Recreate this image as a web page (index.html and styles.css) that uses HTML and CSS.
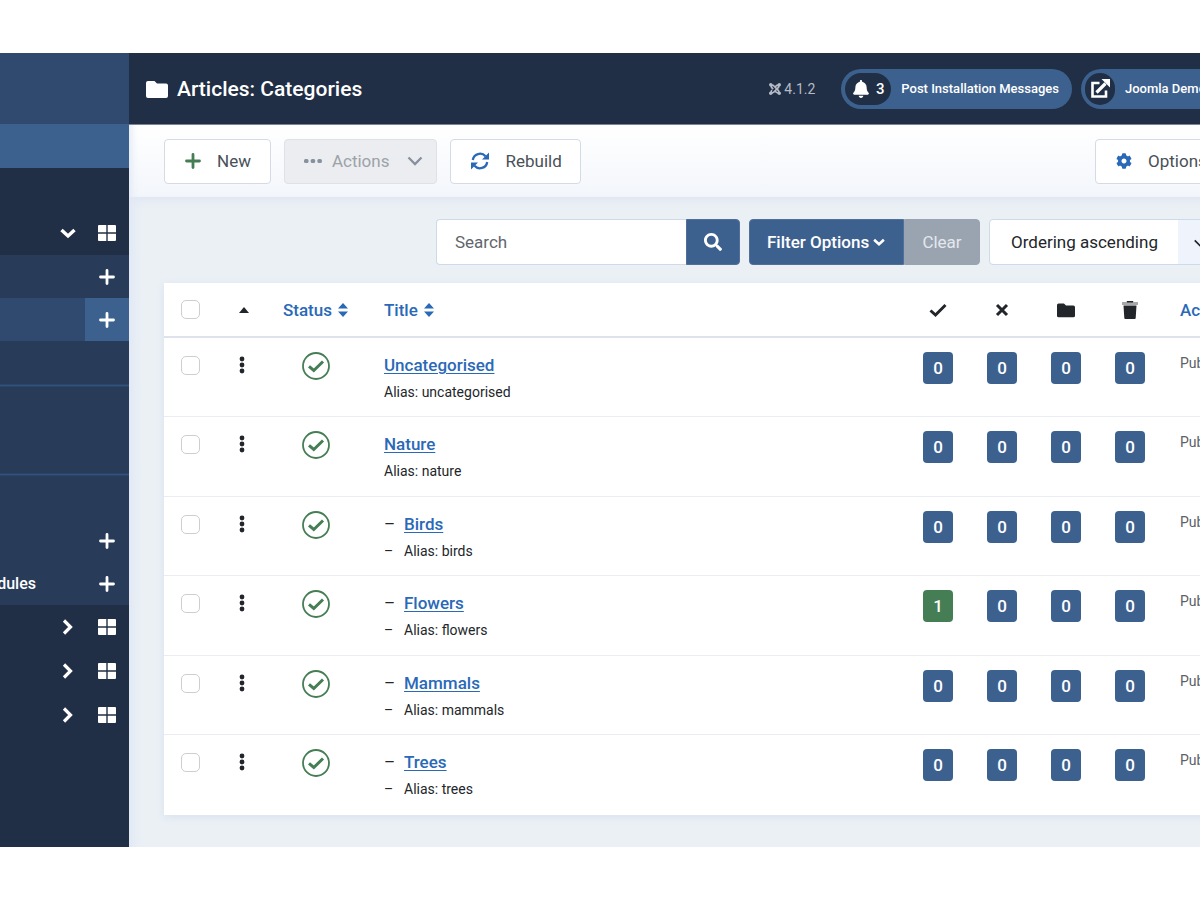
FILE: index.html
```
<!DOCTYPE html>
<html lang="en">
<head>
  <meta charset="UTF-8">
  <title>Articles: Categories</title>
  <link rel="stylesheet" href="styles.css">
</head>
<body>

  <!-- Icon set -->
  <svg class="icon-set" aria-hidden="true">
    <symbol id="folder" viewBox="0 0 22 18"><path d="M2 1h6.500l2.500 2.500h9a2 2 0 0 1 2 2V16a2 2 0 0 1-2 2H2a2 2 0 0 1-2-2V3a2 2 0 0 1 2-2z"/></symbol>
    <symbol id="plus" viewBox="0 0 16 16"><path d="M8 1.500v13M1.500 8h13" fill="none" stroke="currentColor" stroke-width="2.800" stroke-linecap="round"/></symbol>
    <symbol id="grid" viewBox="0 0 18 16"><path d="M1 0h7.300v7.300H0V1a1 1 0 0 1 1-1zM9.700 0H17a1 1 0 0 1 1 1v6.300H9.700zM0 8.700h8.300V16H1a1 1 0 0 1-1-1zM9.700 8.700H18V15a1 1 0 0 1-1 1H9.700z"/></symbol>
    <symbol id="down" viewBox="0 0 16 16"><path d="M1.500 5l6.500 6 6.500-6" fill="none" stroke="currentColor" stroke-width="3.400"/></symbol>
    <symbol id="right" viewBox="0 0 16 16"><path d="M4 1.500L10.500 8 4 14.500" fill="none" stroke="currentColor" stroke-width="3.200"/></symbol>
    <symbol id="thin-down" viewBox="0 0 16 16"><path d="M1.500 4.500L8 11l6.500-6.500" fill="none" stroke="currentColor" stroke-width="2.300"/></symbol>
    <symbol id="dots" viewBox="0 0 18 6"><rect x="0" y="1" width="4.500" height="4" rx="1.500"/><rect x="6.700" y="1" width="4.500" height="4" rx="1.500"/><rect x="13.400" y="1" width="4.500" height="4" rx="1.500"/></symbol>
    <symbol id="handle" viewBox="0 0 6 18"><circle cx="3" cy="3" r="2.400"/><circle cx="3" cy="9" r="2.400"/><circle cx="3" cy="15" r="2.400"/></symbol>
    <symbol id="refresh" viewBox="0 0 18 18"><path d="M1.800 8A7.300 7.300 0 0 1 14.500 4.200M16.200 10A7.300 7.300 0 0 1 3.500 13.800" fill="none" stroke="currentColor" stroke-width="2.300"/><path d="M18 .5V7.500h-7zM0 17.500v-7h7z"/></symbol>
    <symbol id="cog" viewBox="0 0 512 512"><path d="M487.400 315.700l-42.600-24.600c4.300-23.200 4.300-47 0-70.200l42.600-24.600c4.900-2.800 7.100-8.600 5.500-14-11.100-35.600-30-67.800-54.700-94.600-3.800-4.100-10-5.100-14.800-2.300L380.800 110c-17.900-15.400-38.500-27.300-60.800-35.100V25.800c0-5.600-3.900-10.500-9.400-11.700-36.700-8.200-74.300-7.800-109.200 0-5.500 1.200-9.400 6.100-9.400 11.700V75c-22.200 7.900-42.800 19.800-60.800 35.100L88.700 85.500c-4.900-2.800-11-1.900-14.800 2.300-24.700 26.700-43.600 58.900-54.700 94.600-1.700 5.400.6 11.200 5.500 14L67.300 221c-4.300 23.200-4.300 47 0 70.200l-42.600 24.600c-4.900 2.800-7.100 8.600-5.500 14 11.100 35.600 30 67.800 54.700 94.600 3.800 4.100 10 5.100 14.800 2.300l42.600-24.600c17.900 15.400 38.500 27.300 60.800 35.100v49.200c0 5.600 3.900 10.500 9.400 11.700 36.700 8.200 74.300 7.800 109.200 0 5.500-1.200 9.400-6.100 9.400-11.700v-49.200c22.200-7.900 42.800-19.800 60.800-35.100l42.600 24.600c4.900 2.800 11 1.900 14.800-2.300 24.700-26.700 43.600-58.900 54.700-94.600 1.500-5.500-.7-11.300-5.600-14.100zM256 336c-44.100 0-80-35.900-80-80s35.900-80 80-80 80 35.900 80 80-35.900 80-80 80z"/></symbol>
    <symbol id="bell" viewBox="0 0 448 512"><path d="M224 512c35.320 0 63.970-28.650 63.970-64H160.030c0 35.350 28.650 64 63.970 64zm215.390-149.710c-19.320-20.760-55.470-51.990-55.470-154.290 0-77.700-54.480-139.900-127.940-155.160V32c0-17.670-14.320-32-31.980-32s-31.980 14.330-31.980 32v20.840C118.560 68.100 64.080 130.300 64.080 208c0 102.300-36.150 133.530-55.470 154.290-6 6.450-8.660 14.160-8.610 21.710.11 16.400 12.980 32 32.100 32h383.800c19.120 0 32-15.600 32.100-32 .05-7.550-2.610-15.270-8.610-21.710z"/></symbol>
    <symbol id="search" viewBox="0 0 512 512"><path d="M505 442.700L405.300 343c-4.500-4.500-10.600-7-17-7H372c27.600-35.300 44-79.700 44-128C416 93.100 322.900 0 208 0S0 93.100 0 208s93.100 208 208 208c48.300 0 92.700-16.400 128-44v16.300c0 6.400 2.500 12.500 7 17l99.700 99.700c9.400 9.400 24.600 9.400 33.900 0l28.300-28.300c9.400-9.400 9.400-24.600.1-34zM208 336c-70.700 0-128-57.200-128-128 0-70.700 57.200-128 128-128 70.700 0 128 57.200 128 128 0 70.700-57.200 128-128 128z"/></symbol>
    <symbol id="external" viewBox="0 0 20 20"><path d="M9.500 4H2.500v13.500h13.500v-6" fill="none" stroke="currentColor" stroke-width="2.600"/><path d="M6.500 13.500l9-9" fill="none" stroke="currentColor" stroke-width="3.200"/><path d="M11.500 0H20v8.500z"/></symbol>
    <symbol id="joomla" viewBox="0 0 16 16"><path d="M3 3c1.500-.5 2.600 0 3.600 1L12 9.500c1.200 1.200 1.300 2.300 1 3.500M13 3c.5 1.500 0 2.600-1 3.600L6.500 12C5.300 13.200 4.200 13.300 3 13M3 3c-.4 1.500 0 2.600 1 3.600l1.500 1.500M13 3c-1.500-.5-2.600 0-3.600 1L8 5.400M13 13c-1.500.4-2.600 0-3.600-1L8 10.600M3 13c-.4-1.500 0-2.600 1-3.600" fill="none" stroke="currentColor" stroke-width="2.300"/><circle cx="2.300" cy="2.300" r="2.300"/><circle cx="13.700" cy="2.300" r="2.300"/><circle cx="2.300" cy="13.700" r="2.300"/><circle cx="13.700" cy="13.700" r="2.300"/></symbol>
    <symbol id="check" viewBox="0 0 18 16"><path d="M1.500 8.500l5 4.500L16.500 3" fill="none" stroke="currentColor" stroke-width="3"/></symbol>
    <symbol id="cross" viewBox="0 0 16 16"><path d="M3 3l10 10M13 3L3 13" fill="none" stroke="currentColor" stroke-width="3"/></symbol>
    <symbol id="trash" viewBox="0 0 16 18"><path d="M5 0h6l1 1h4v3H0V1h4z" opacity=".4"/><path d="M5 0h6v1.500H5zM1.500 4.500h13L13.700 17a1 1 0 0 1-1 1H3.300a1 1 0 0 1-1-1z"/></symbol>
    <symbol id="sort" viewBox="0 0 10 14"><path d="M5 0l5 5.500H0zM5 14l5-5.500H0z"/></symbol>
    <symbol id="caret-up" viewBox="0 0 10 6"><path d="M5 0l5 6H0z"/></symbol>
    <symbol id="published" viewBox="0 0 28 28"><circle cx="14" cy="14" r="13" fill="none" stroke="currentColor" stroke-width="1.800"/><path d="M7 14.300l4.800 4.200L21 9.500" fill="none" stroke="currentColor" stroke-width="3"/></symbol>
  </svg>

  <div class="wrapper">

    <nav class="sidebar" aria-label="Main menu">
      <div class="brand"></div>
      <div class="menu-toggle"></div>
      <div class="menu">
        <div class="menu-row">
          <a href="#" aria-label="Collapse"><svg class="icon-16"><use href="#down"/></svg></a>
          <a href="#" class="quick" aria-label="Dashboard"><svg class="icon-18"><use href="#grid"/></svg></a>
        </div>
        <div class="submenu">
          <div class="menu-row"><a href="#" class="quick" aria-label="Add"><svg class="icon-16"><use href="#plus"/></svg></a></div>
          <div class="menu-row active"><a href="#" class="quick" aria-label="Add"><svg class="icon-16"><use href="#plus"/></svg></a></div>
          <div class="menu-row"></div>
          <hr>
          <div class="menu-row"></div>
          <div class="menu-row"></div>
          <hr>
          <div class="menu-row"></div>
          <div class="menu-row"><a href="#" class="quick" aria-label="Add"><svg class="icon-16"><use href="#plus"/></svg></a></div>
          <div class="menu-row">
            <a href="#" class="menu-link">Modules</a>
            <a href="#" class="quick" aria-label="Add"><svg class="icon-16"><use href="#plus"/></svg></a>
          </div>
        </div>
        <div class="menu-row">
          <a href="#" aria-label="Expand"><svg class="icon-16"><use href="#right"/></svg></a>
          <a href="#" class="quick" aria-label="Dashboard"><svg class="icon-18"><use href="#grid"/></svg></a>
        </div>
        <div class="menu-row">
          <a href="#" aria-label="Expand"><svg class="icon-16"><use href="#right"/></svg></a>
          <a href="#" class="quick" aria-label="Dashboard"><svg class="icon-18"><use href="#grid"/></svg></a>
        </div>
        <div class="menu-row">
          <a href="#" aria-label="Expand"><svg class="icon-16"><use href="#right"/></svg></a>
          <a href="#" class="quick" aria-label="Dashboard"><svg class="icon-18"><use href="#grid"/></svg></a>
        </div>
      </div>
    </nav>

    <div class="main">
      <div class="page">

        <header class="header">
          <svg class="folder-icon"><use href="#folder"/></svg>
          <h1>Articles: Categories</h1>
          <div class="version"><svg class="icon-12"><use href="#joomla"/></svg>4.1.2</div>
          <a href="#" class="pill">
            <span class="pill-icon"><svg class="icon-18"><use href="#bell"/></svg>3</span>
            Post Installation Messages
          </a>
          <a href="#" class="pill last">
            <span class="pill-icon round"><svg class="icon-20"><use href="#external"/></svg></span>
            Joomla Demo
          </a>
        </header>

        <div class="toolbar">
          <button class="btn new"><svg class="icon-16"><use href="#plus"/></svg>New</button>
          <button class="btn actions" disabled><svg class="icon-18"><use href="#dots"/></svg>Actions<svg class="arrow"><use href="#thin-down"/></svg></button>
          <button class="btn rebuild"><svg class="icon-18"><use href="#refresh"/></svg>Rebuild</button>
          <button class="btn options"><svg class="icon-16"><use href="#cog"/></svg>Options</button>
        </div>

        <main class="content">
          <form class="filters">
            <div class="group">
              <input type="text" class="search" placeholder="Search" aria-label="Search">
              <button type="button" class="search-btn" aria-label="Search"><svg class="icon-18"><use href="#search"/></svg></button>
            </div>
            <div class="group">
              <button type="button" class="filter-btn">Filter Options<svg class="icon-12"><use href="#down"/></svg></button>
              <button type="button" class="clear-btn">Clear</button>
            </div>
            <select class="ordering" aria-label="Sort by">
              <option>Ordering ascending</option>
            </select>
          </form>

          <table>
            <thead>
              <tr>
                <th class="col-check"><input type="checkbox" aria-label="Select all"></th>
                <th class="col-order"><svg class="caret"><use href="#caret-up"/></svg></th>
                <th class="col-status"><a href="#">Status<svg class="sort"><use href="#sort"/></svg></a></th>
                <th class="col-title"><a href="#">Title<svg class="sort"><use href="#sort"/></svg></a></th>
                <th class="col-count"><svg class="icon-18"><use href="#check"/></svg></th>
                <th class="col-count"><svg class="icon-16"><use href="#cross"/></svg></th>
                <th class="col-count"><svg class="icon-18"><use href="#folder"/></svg></th>
                <th class="col-count"><svg class="icon-18"><use href="#trash"/></svg></th>
                <th class="col-access"><a href="#">Access</a></th>
              </tr>
            </thead>
            <tbody id="categoryRows">
              <!-- Rows are inserted below -->
            </tbody>
          </table>
        </main>

      </div>
    </div>

  </div>

  <script>
    const categories = [
      { title: "Uncategorised", alias: "uncategorised", level: 0, published: 0 },
      { title: "Nature", alias: "nature", level: 0, published: 0 },
      { title: "Birds", alias: "birds", level: 1, published: 0 },
      { title: "Flowers", alias: "flowers", level: 1, published: 1 },
      { title: "Mammals", alias: "mammals", level: 1, published: 0 },
      { title: "Trees", alias: "trees", level: 1, published: 0 }
    ];
    const tbody = document.getElementById("categoryRows");

    function badge(count) {
      return `<td class="col-count"><a href="#" class="badge${count > 0 ? " green" : ""}">${count}</a></td>`;
    }

    categories.forEach((cat) => {
      const dash = cat.level ? `<span class="dash">–</span>` : "";
      const row = document.createElement("tr");

      row.innerHTML = `
        <td class="col-check"><input type="checkbox" aria-label="Select ${cat.title}"></td>
        <td class="col-order"><svg class="handle"><use href="#handle"/></svg></td>
        <td class="col-status"><svg class="published"><use href="#published"/></svg></td>
        <td class="col-title">
          <div class="name">${dash}<a href="#">${cat.title}</a></div>
          <div class="alias">${dash}Alias: ${cat.alias}</div>
        </td>
        ${badge(cat.published)}
        ${badge(0)}
        ${badge(0)}
        ${badge(0)}
        <td class="col-access">Public</td>
      `;
      tbody.appendChild(row);
    });
  </script>

</body>
</html>
```

FILE: styles.css
```
* {
  box-sizing: border-box;
}

body {
  font-family: Roboto, "Liberation Sans", sans-serif;
  font-size: 17px;
  line-height: 24px;
  color: #22262a;
  background-color: white;
  margin: 0;
}

a {
  color: #2a69b8;
}

button, input, select {
  font-family: inherit;
  font-size: inherit;
  margin: 0;
}

svg {
  fill: currentColor;
  flex: none;
  display: block;
}

.icon-set {
  display: none;
}

.icon-12 { width: 12px; height: 12px; }
.icon-16 { width: 16px; height: 16px; }
.icon-18 { width: 18px; height: 18px; }
.icon-20 { width: 20px; height: 20px; }

.wrapper {
  display: flex;
  margin: 53px 0;
}

/* Sidebar */
.sidebar {
  width: 129px;
  flex: none;
  overflow: hidden;
  background-color: #202f45;
}

.brand {
  height: 71px;
  background-color: #2f4a6e;
}

.menu-toggle {
  height: 44px;
  background-color: #3d618f;
}

.menu {
  padding-top: 43px;
}

.menu-row {
  display: flex;
  align-items: center;
  justify-content: flex-end;
  height: 44px;
}

.menu-row a {
  flex: none;
  color: white;
  text-decoration: none;
}

.menu-row .menu-link {
  font-size: 16px;
  font-weight: 500;
  margin-right: 40px;
}

.menu-row .quick {
  display: flex;
  align-items: center;
  justify-content: center;
  width: 44px;
  height: 100%;
  margin-left: 9px;
}

.submenu {
  background-color: #283c59;
}

.submenu .menu-row {
  height: 43px;
}

.submenu .active {
  background-color: #2f4a6e;
}

.submenu .active .quick {
  background-color: #3d618f;
}

.submenu hr {
  height: 1px;
  margin: 1px 0;
  border: none;
  background-color: #30527d;
  outline: 1px solid #2b4568;
}

/* Main area, runs past the right edge of the window */
.main {
  flex: 1;
  min-width: 0;
  overflow: hidden;
  background-color: #ebf0f5;
}

.page {
  width: calc(100% + 100px);
}

.header {
  position: relative;
  z-index: 1;
  display: flex;
  align-items: center;
  height: 72px;
  padding: 0 35px 0 17px;
  background-color: #202f45;
  border-bottom: 1px solid #7c8595;
  color: white;
  white-space: nowrap;
}

.folder-icon {
  width: 22px;
  height: 18px;
}

h1 {
  margin: 0 auto 0 9px;
  font-size: 21px;
  font-weight: 500;
}

.version {
  display: flex;
  align-items: center;
  gap: 3px;
  margin-right: 26px;
  font-size: 14px;
  color: #b4bbc5;
}

.pill {
  display: flex;
  align-items: center;
  gap: 10px;
  height: 40px;
  padding: 0 13px 0 4px;
  border-radius: 20px;
  background-color: #3d618f;
  color: white;
  font-size: 13px;
  font-weight: 500;
  text-decoration: none;
}

.pill.last {
  width: 184px;
  margin-left: 9px;
}

.pill-icon {
  display: flex;
  align-items: center;
  justify-content: center;
  gap: 6px;
  width: 46px;
  height: 32px;
  border-radius: 16px;
  background-color: #202f45;
  font-size: 15px;
}

.pill-icon.round {
  width: 30px;
}

.toolbar {
  display: flex;
  align-items: center;
  gap: 13px;
  height: 72px;
  padding: 0 35px;
  background-image: linear-gradient(#ffffff, #f3f6fb);
  box-shadow: 0 2px 10px #dde4f1, inset 8px 0 8px -6px #dfe7f5;
}

.btn {
  display: flex;
  align-items: center;
  gap: 16px;
  height: 45px;
  padding: 0 18px 0 20px;
  border: 1px solid #d5dbe3;
  border-radius: 4px;
  background-color: white;
  color: #495057;
}

.btn.new {
  padding-right: 19px;
}

.btn.new svg {
  color: #457d54;
}

.btn.actions {
  gap: 10px;
  padding: 0 13px 0 19px;
  background-color: #ebedf0;
  border-color: #dde2e8;
  color: #9da2a8;
}

.btn.actions svg {
  color: #87919d;
}

.btn.actions .arrow {
  width: 16px;
  height: 16px;
  margin-left: 8px;
}

.btn.rebuild svg,
.btn.options svg {
  color: #2a69b8;
}

.btn.options {
  width: 170px;
  margin-left: auto;
}

.content {
  padding: 22px 35px 32px;
  box-shadow: inset 14px 0 12px -10px #dfe7f5;
}

/* Filters */
.filters {
  display: flex;
  justify-content: flex-end;
  gap: 9px;
  margin-bottom: 18px;
}

.group {
  display: flex;
}

.group button {
  height: 46px;
  border: 1px solid #506f99;
  background-color: #3d618f;
  color: white;
}

.search {
  width: 250px;
  height: 46px;
  padding: 0 18px;
  border: 1px solid #ced9ea;
  border-right: none;
  border-radius: 4px 0 0 4px;
  background-color: white;
}

.search::placeholder {
  color: #5f666d;
  opacity: 1;
}

.group .search-btn {
  width: 54px;
  padding: 0 17px;
  border-radius: 0 4px 4px 0;
}

.group .filter-btn {
  display: flex;
  align-items: center;
  gap: 4px;
  width: 155px;
  padding: 0 17px;
  border-radius: 4px 0 0 4px;
  font-weight: 500;
  white-space: nowrap;
}

.group .clear-btn {
  width: 76px;
  border-color: #9aa4b1;
  border-radius: 0 4px 4px 0;
  background-color: #9aa4b1;
  color: #e4e8ec;
}

.ordering {
  appearance: none;
  width: 276px;
  height: 46px;
  padding: 0 21px;
  border: 1px solid #ced9ea;
  border-radius: 4px;
  color: #22262a;
  background-color: #eff3fc;
  background-image:
    url("data:image/svg+xml,%3Csvg xmlns='http://www.w3.org/2000/svg' viewBox='0 0 16 16'%3E%3Cpath d='M2 5l6 6 6-6' fill='none' stroke='%2322262a' stroke-width='2'/%3E%3C/svg%3E"),
    linear-gradient(white, white);
  background-repeat: no-repeat;
  background-position: 203px 16px, 0 0;
  background-size: 14px 14px, 188px 100%;
}

/* Category list */
table {
  width: 100%;
  table-layout: fixed;
  border-collapse: separate;
  border-spacing: 0;
  background-color: white;
  box-shadow: 0 2px 8px #d9e1ee;
}

th {
  height: 55px;
  padding: 0;
  text-align: left;
  font-weight: 500;
  border-bottom: 2px solid #dee2ea;
}

th a {
  display: flex;
  align-items: center;
  gap: 6px;
  text-decoration: none;
}

td {
  height: 79px;
  padding: 14px 0 0;
  vertical-align: top;
  border-bottom: 1px solid #e9edf2;
}

tr:nth-child(even) td {
  height: 80px;
}

tr:last-child td {
  border-bottom: none;
}

th svg, td svg {
  margin: 0 auto;
}

.col-check { width: 53px; text-align: center; }
.col-order { width: 53px; }
.col-status { width: 114px; padding-left: 13px; }
.col-count { width: 64px; text-align: center; }
.col-access { width: 103px; padding-left: 18px; }

td.col-check {
  padding-top: 18px;
}

td.col-order {
  padding: 18px 4px 0 0;
}

td.col-access {
  padding-top: 13px;
  font-size: 14px;
  color: #5b6167;
}

input[type="checkbox"] {
  appearance: none;
  display: block;
  width: 19px;
  height: 19px;
  margin: 0 auto;
  border: 1px solid #ccced2;
  border-radius: 5px;
  background-color: white;
}

.caret {
  width: 10px;
  height: 6px;
}

.sort {
  width: 10px;
  height: 14px;
}

th a .sort {
  margin: 0;
}

.handle {
  width: 6px;
  height: 18px;
}

td .published {
  width: 28px;
  height: 28px;
  margin: 0 0 0 19px;
  color: #457d54;
}

.col-title .name {
  line-height: 26px;
}

.name a {
  font-weight: 500;
  text-decoration-thickness: 1px;
  text-underline-offset: 2px;
}

.alias {
  font-size: 14px;
  line-height: 28px;
}

.dash {
  display: inline-block;
  width: 20px;
}

.badge {
  display: block;
  width: 30px;
  margin: 0 auto;
  border-radius: 4px;
  background-color: #3d618f;
  color: white;
  font-weight: 500;
  line-height: 32px;
  text-decoration: none;
}

.badge.green {
  background-color: #457d54;
}
```
